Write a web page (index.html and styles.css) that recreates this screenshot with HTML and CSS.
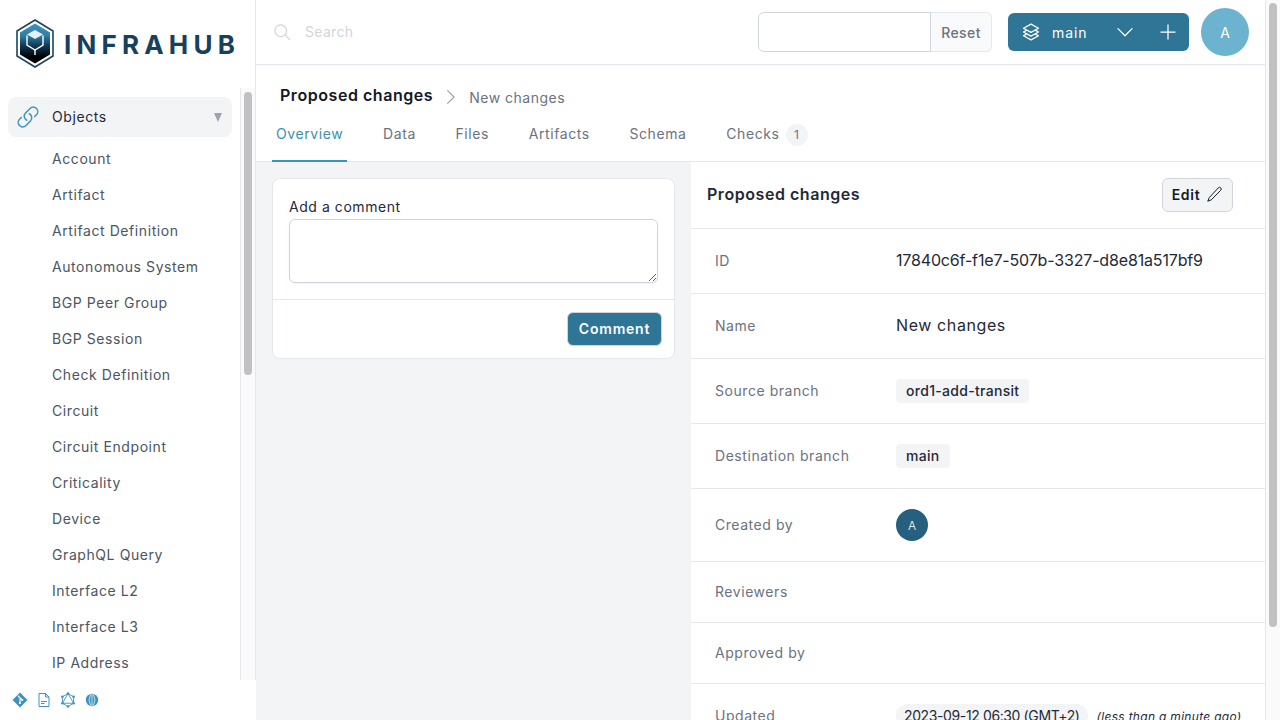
FILE: index.html
```html
<!DOCTYPE html>
<html lang="en">
<head>
  <meta charset="UTF-8" />
  <title>Infrahub - Proposed changes</title>
  <link rel="stylesheet" href="styles.css">
</head>
<body>
  <aside class="sidebar">
    <div class="logo">
      <svg class="logo-mark" viewBox="0 0 40 50" width="40" height="50">
        <defs>
          <linearGradient id="hexfill" x1="0" y1="0" x2="0" y2="1">
            <stop offset="0" stop-color="#3d93bd"/>
            <stop offset="0.3" stop-color="#2f7fa6"/>
            <stop offset="0.55" stop-color="#123a55"/>
            <stop offset="0.85" stop-color="#000"/>
          </linearGradient>
        </defs>
        <polygon points="20,1 38,12 38,37 20,48 2,37 2,12" fill="#fff" stroke="#1c4460" stroke-width="1.6"/>
        <polygon points="20,4.5 35,13.5 35,35.5 20,44.5 5,35.5 5,13.5" fill="url(#hexfill)"/>
        <polygon points="20,11 28,15.5 20,20 12,15.5" fill="#e8f1f6"/>
        <path d="M12 16.5 V26 L20 31 L28 26 V16.5" fill="none" stroke="#fff" stroke-width="1.4"/>
        <path d="M20 31 V36" stroke="#fff" stroke-width="1.4"/>
      </svg>
      <span class="logo-text">INFRAHUB</span>
    </div>

    <div class="nav-wrap">
      <nav class="nav">
        <div class="nav-head">
          <svg class="nav-link-icon" viewBox="0 0 24 24" width="24" height="24" fill="none" stroke="#3d93bd" stroke-width="1.5" stroke-linecap="round" stroke-linejoin="round">
            <path d="M13.2 8.8a4.5 4.5 0 0 1 1.25 7.25l-4.5 4.5a4.5 4.5 0 0 1-6.4-6.36l1.76-1.76"/>
            <path d="M10.8 15.2a4.5 4.5 0 0 1-1.25-7.25l4.5-4.5a4.5 4.5 0 0 1 6.4 6.36l-1.76 1.76"/>
          </svg>
          <span class="nav-title">Objects</span>
          <span class="nav-caret"></span>
        </div>
        <a class="nav-item">Account</a>
        <a class="nav-item">Artifact</a>
        <a class="nav-item">Artifact Definition</a>
        <a class="nav-item">Autonomous System</a>
        <a class="nav-item">BGP Peer Group</a>
        <a class="nav-item">BGP Session</a>
        <a class="nav-item">Check Definition</a>
        <a class="nav-item">Circuit</a>
        <a class="nav-item">Circuit Endpoint</a>
        <a class="nav-item">Criticality</a>
        <a class="nav-item">Device</a>
        <a class="nav-item">GraphQL Query</a>
        <a class="nav-item">Interface L2</a>
        <a class="nav-item">Interface L3</a>
        <a class="nav-item">IP Address</a>
      </nav>
      <div class="nav-scroll"><div class="nav-thumb"></div></div>
    </div>

    <div class="side-foot">
      <svg viewBox="0 0 16 16" width="16" height="16"><path fill="#3d93bd" d="M8 0.5 15.5 8 8 15.5 0.5 8z"/><path d="M5.8 3.6 10.2 8M8 6V11" stroke="#fff" stroke-width="1.1" fill="none"/><circle cx="8" cy="11" r="1.1" fill="#fff"/><circle cx="10.2" cy="8" r="1.1" fill="#fff"/></svg>
      <svg viewBox="0 0 16 16" width="16" height="16" fill="none" stroke="#3d93bd" stroke-width="1"><path d="M3 1.5h6.5L13 5v9.5H3z"/><path d="M9.5 1.5V5H13"/><path d="M5 9.5h6M5 11.5h3.5" stroke-width="1.2"/></svg>
      <svg viewBox="0 0 16 16" width="16" height="16" fill="none" stroke="#3d93bd" stroke-width="0.9"><polygon points="8,1.5 13.6,4.75 13.6,11.25 8,14.5 2.4,11.25 2.4,4.75"/><polygon points="8,1.5 13.6,11.25 2.4,11.25"/><g fill="#3d93bd" stroke="none"><circle cx="8" cy="1.5" r="1.3"/><circle cx="13.6" cy="4.75" r="1.3"/><circle cx="13.6" cy="11.25" r="1.3"/><circle cx="8" cy="14.5" r="1.3"/><circle cx="2.4" cy="11.25" r="1.3"/><circle cx="2.4" cy="4.75" r="1.3"/></g></svg>
      <svg viewBox="0 0 16 16" width="16" height="16"><circle cx="8" cy="8" r="6.2" fill="#3d93bd"/><path d="M6.6 2.4 5 8l1.6 5.6M9.4 2.4 11 8l-1.6 5.6M8 2v12" stroke="#fff" stroke-width="0.7" fill="none"/></svg>
    </div>
  </aside>

  <div class="page">
    <header class="topbar">
      <div class="search">
        <svg viewBox="0 0 24 24" width="20" height="20" fill="none" stroke="#d1d5db" stroke-width="1.5" stroke-linecap="round"><circle cx="10.5" cy="10.5" r="7"/><path d="M15.8 15.8 21 21"/></svg>
        <span class="search-text">Search</span>
      </div>
      <div class="date-box">
        <div class="date-input"></div>
        <button class="date-reset">Reset</button>
      </div>
      <div class="branch">
        <svg viewBox="0 0 24 24" width="20" height="20" fill="none" stroke="#fff" stroke-width="1.5" stroke-linejoin="round" stroke-linecap="round"><path d="M12 2.5 21 7.5 12 12.5 3 7.5z"/><path d="M6.5 10 3 12 12 17 21 12 17.5 10"/><path d="M6.5 14.5 3 16.5 12 21.5 21 16.5 17.5 14.5"/></svg>
        <span class="branch-name">main</span>
        <svg class="branch-chevron" viewBox="0 0 24 24" width="20" height="20" fill="none" stroke="#fff" stroke-width="1.5" stroke-linecap="round" stroke-linejoin="round"><path d="M3.5 8 12 16.5 20.5 8"/></svg>
        <svg class="branch-plus" viewBox="0 0 24 24" width="20" height="20" fill="none" stroke="#fff" stroke-width="1.5" stroke-linecap="round"><path d="M12 3.5v17M3.5 12h17"/></svg>
      </div>
      <div class="avatar">A</div>
    </header>

    <div class="title-row">
      <h1 class="title">Proposed changes</h1>
      <svg viewBox="0 0 24 24" width="18" height="18" fill="none" stroke="#9ca3af" stroke-width="1.5" stroke-linecap="round" stroke-linejoin="round"><path d="M7.5 3.5 16 12l-8.500 8.500"/></svg>
      <span class="title-sub">New changes</span>
    </div>

    <div class="tabs">
      <a class="tab active">Overview</a>
      <a class="tab">Data</a>
      <a class="tab">Files</a>
      <a class="tab">Artifacts</a>
      <a class="tab">Schema</a>
      <a class="tab">Checks<span class="tab-count">1</span></a>
    </div>

    <div class="content">
      <section class="left">
        <div class="card">
          <div class="card-body">
            <label class="field-label" for="comment">Add a comment</label>
            <textarea class="field" id="comment"></textarea>
          </div>
          <div class="card-foot">
            <button class="btn-primary">Comment</button>
          </div>
        </div>
      </section>

      <section class="details">
        <div class="details-head">
          <h2 class="details-title">Proposed changes</h2>
          <button class="btn-edit">Edit
            <svg viewBox="0 0 24 24" width="17" height="17" fill="none" stroke="#111827" stroke-width="1.4" stroke-linejoin="round"><path d="M17.4 2.6a2.400 2.400 0 0 1 3.400 3.400L7.500 19.500 2.500 21.500l2-5z"/></svg>
          </button>
        </div>
        <div class="row"><span class="row-label">ID</span><span class="row-value row-id">17840c6f-f1e7-507b-3327-d8e81a517bf9</span></div>
        <div class="row"><span class="row-label">Name</span><span class="row-value">New changes</span></div>
        <div class="row"><span class="row-label">Source branch</span><span class="pill">ord1-add-transit</span></div>
        <div class="row"><span class="row-label">Destination branch</span><span class="pill">main</span></div>
        <div class="row row-user"><span class="row-label">Created by</span><span class="user">A</span></div>
        <div class="row row-empty"><span class="row-label">Reviewers</span></div>
        <div class="row row-empty"><span class="row-label">Approved by</span></div>
        <div class="row"><span class="row-label">Updated</span><span class="pill pill-date">2023-09-12 06:30 (GMT+2)</span><em class="ago">(less than a minute ago)</em></div>
      </section>
    </div>
  </div>

  <div class="page-scroll"><div class="page-thumb"></div></div>
</body>
</html>
```

FILE: styles.css
```css
* {
  box-sizing: border-box;
}
html, body {
  margin: 0;
  height: 100%;
  overflow: hidden;
}
body {
  display: flex;
  font-family: "Inter", "Liberation Sans", sans-serif;
  font-size: 14px;
  color: #111827;
  background: #fff;
}
h1, h2 {
  margin: 0;
}

/* sidebar */
.sidebar {
  width: 256px;
  flex: none;
  display: flex;
  flex-direction: column;
  height: 100vh;
}
.logo {
  height: 88px;
  flex: none;
  display: flex;
  align-items: center;
  gap: 9px;
  padding: 0 0 0 15px;
  border-right: 1px solid #e5e7eb;
}
.logo-text {
  font-size: 26px;
  font-weight: 700;
  letter-spacing: 5.2px;
  color: #17405c;
}
.nav-wrap {
  flex: 1;
  min-height: 0;
  display: flex;
  border-right: 1px solid #e5e7eb;
}
.nav {
  flex: 1;
  min-width: 0;
  overflow: hidden;
  padding: 9px 0 0 8px;
  background: #fff;
}
.nav-scroll {
  width: 15px;
  flex: none;
  padding: 4px 3px 0 3px;
  background: #fafafa;
  border-left: 1px solid #e5e7eb;
}
.nav-thumb {
  height: 283px;
  background: #c1c1c1;
  border-radius: 4px;
}
.nav-head {
  height: 40px;
  width: 224px;
  margin-bottom: 4px;
  display: flex;
  align-items: center;
  padding: 0 10px 0 8px;
  background: #f3f4f6;
  border-radius: 8px;
}
.nav-title {
  flex: 1;
  margin: -2px 0 0 12px;
  letter-spacing: 0.6px;
  color: #1f2937;
}
.nav-caret {
  width: 0;
  height: 0;
  border-left: 4px solid transparent;
  border-right: 4px solid transparent;
  border-top: 9px solid #9ca3af;
}
.nav-item {
  display: block;
  height: 36px;
  line-height: 36px;
  padding-left: 44px;
  letter-spacing: 0.58px;
  color: #4b5563;
}
.side-foot {
  height: 40px;
  flex: none;
  display: flex;
  align-items: center;
  gap: 8px;
  padding-left: 12px;
  background: #fff;
}

/* main column */
.page {
  flex: 1;
  min-width: 0;
  height: 100vh;
  overflow: hidden;
  background: #fff;
}
.page-scroll {
  width: 15px;
  flex: none;
  padding: 3px 3px 0 3px;
  background: #fafafa;
  border-left: 1px solid #e5e7eb;
}
.page-thumb {
  height: 624px;
  background: #c1c1c1;
  border-radius: 4px;
}
.topbar {
  height: 65px;
  display: flex;
  align-items: center;
  padding: 0 16px;
  border-bottom: 1px solid #e5e7eb;
  box-shadow: 0 1px 2px rgba(0, 0, 0, 0.04);
}
.search {
  flex: 1;
  display: flex;
  align-items: center;
  gap: 13px;
}
.search-text {
  margin-top: -2px;
  color: #d1d5db;
  letter-spacing: 0.3px;
}
.date-box {
  width: 234px;
  height: 40px;
  display: flex;
}
.date-input {
  flex: 1;
  background: #fff;
  border: 1px solid #d1d5db;
  border-radius: 6px 0 0 6px;
}
.date-reset {
  width: 61px;
  border: 1px solid #e5e7eb;
  border-left: 0;
  border-radius: 0 6px 6px 0;
  padding: 0;
  background: #f9fafb;
  font: 500 14px "Inter", "Liberation Sans", sans-serif;
  letter-spacing: 0.4px;
  color: #6b7280;
}
.branch {
  width: 181px;
  height: 38px;
  margin-left: 16px;
  display: flex;
  align-items: center;
  padding: 0 11px 0 13px;
  background: #2e7596;
  border-radius: 6px;
  color: #fff;
}
.branch-name {
  flex: 1;
  margin-left: 11px;
  letter-spacing: 0.9px;
}
.branch-plus {
  margin-left: 23px;
}
.avatar {
  width: 48px;
  height: 48px;
  margin-left: 12px;
  border-radius: 50%;
  background: #6bb3cf;
  color: #fff;
  display: flex;
  align-items: center;
  justify-content: center;
}
.title-row {
  display: flex;
  align-items: center;
  height: 61px;
  padding: 0 0 0 24px;
}
.title {
  font-size: 16px;
  font-weight: 600;
  letter-spacing: 0.55px;
  margin-top: -2px;
}
.title-row svg {
  margin: 3px 0 0 9px;
}
.title-sub {
  margin: 3px 0 0 9px;
  color: #6b7280;
  letter-spacing: 0.5px;
}
.tabs {
  display: flex;
  height: 44px;
  margin-top: -8px;
  padding-left: 16px;
  border-bottom: 1px solid #e5e7eb;
}
.tab {
  height: 44px;
  padding: 0 4px;
  margin-right: 31.6px;
  line-height: 32px;
  letter-spacing: 0.6px;
  color: #6b7280;
}
.tab.active {
  color: #3d8fb5;
  border-bottom: 2px solid #3d93bd;
}
.tab-count {
  display: inline-block;
  width: 22px;
  height: 22px;
  margin-left: 6px;
  line-height: 22px;
  text-align: center;
  font-size: 12px;
  letter-spacing: 0;
  border-radius: 50%;
  background: #f3f4f6;
}
.content {
  display: flex;
  min-height: 660px;
}
.left {
  width: 435px;
  flex: none;
  padding: 16px;
  background: #f3f4f6;
}
.card {
  background: #fff;
  border: 1px solid #e5e7eb;
  border-radius: 8px;
}
.card-body {
  padding: 18px 16px 16px;
  border-bottom: 1px solid #e5e7eb;
}
.field-label {
  display: block;
  height: 22px;
  line-height: 20px;
  letter-spacing: 0.55px;
  color: #1f2937;
}
.field {
  display: block;
  width: 100%;
  height: 64px;
  margin: 0;
  border: 1px solid #d1d5db;
  border-radius: 6px;
  background: #fff;
  box-shadow: 0 1px 2px rgba(0, 0, 0, 0.05);
}
.card-foot {
  display: flex;
  justify-content: flex-end;
  padding: 12px 12px 12px 0;
}
.btn-primary {
  height: 34px;
  width: 95px;
  border: 1px solid #d1d5db;
  border-radius: 6px;
  padding: 0 0 2px;
  background: #2e7596;
  color: #fff;
  font: 600 14px "Inter", "Liberation Sans", sans-serif;
  letter-spacing: 0.8px;
}
.details {
  flex: 1;
  min-width: 0;
  background: #fff;
}
.details-head {
  height: 67px;
  display: flex;
  align-items: center;
  justify-content: space-between;
  padding: 0 32px 0 16px;
  border-bottom: 1px solid #e5e7eb;
}
.details-title {
  margin-top: -2px;
  font-size: 16px;
  font-weight: 600;
  letter-spacing: 0.55px;
  color: #1f2937;
}
.btn-edit {
  width: 71px;
  height: 34px;
  display: flex;
  align-items: center;
  justify-content: center;
  gap: 6px;
  padding: 0 0 1px;
  border: 1px solid #d1d5db;
  border-radius: 6px;
  background: #f3f4f6;
  font: 600 14px "Inter", "Liberation Sans", sans-serif;
  letter-spacing: 0.7px;
  color: #111827;
}
.row {
  height: 65px;
  display: flex;
  align-items: center;
  padding-left: 24px;
  border-bottom: 1px solid #e5e7eb;
}
.row-user {
  height: 73px;
}
.row-empty {
  height: 61px;
}
.row-label {
  width: 181px;
  flex: none;
  margin-top: -2px;
  letter-spacing: 0.55px;
  color: #6b7280;
}
.row-value {
  margin-top: -2px;
  font-size: 16px;
  letter-spacing: 0.6px;
  color: #1f2937;
}
.row-id {
  letter-spacing: -0.16px;
}
.pill {
  height: 24px;
  padding: 0 10px;
  line-height: 24px;
  border-radius: 4px;
  background: #f3f4f6;
  font-weight: 500;
  letter-spacing: 0.3px;
  color: #1f2937;
}
.pill-date {
  border-radius: 12px;
  padding: 0 8px;
  font-weight: 400;
  letter-spacing: -0.38px;
}
.ago {
  margin-left: 9px;
  font-size: 12px;
  letter-spacing: 0.3px;
  color: #1f2937;
}
.user {
  width: 32px;
  height: 32px;
  border-radius: 50%;
  background: #27607f;
  color: #fff;
  font-size: 12px;
  font-weight: 300;
  display: flex;
  align-items: center;
  justify-content: center;
}
```
